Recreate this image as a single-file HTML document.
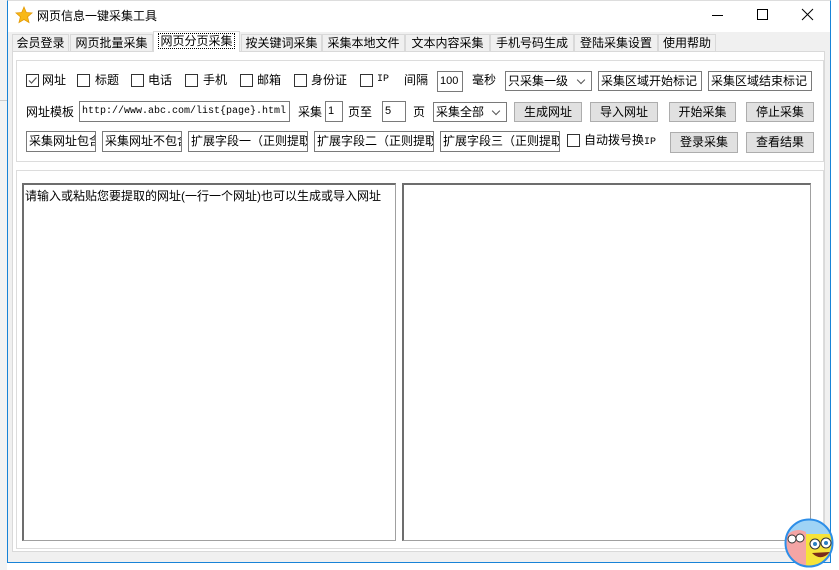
<!DOCTYPE html>
<html><head><meta charset="utf-8"><style>
*{box-sizing:border-box;margin:0;padding:0}
body{width:839px;height:570px;background:#fff;position:relative;overflow:hidden;font-family:"Liberation Sans","Noto Sans CJK SC",sans-serif;font-size:12px;color:#000}
.a{position:absolute;white-space:nowrap}
.t{position:absolute;white-space:nowrap;line-height:16px}
.cb{position:absolute;width:13px;height:13px;border:1px solid #333;background:#fff}
.in{position:absolute;border:1px solid #7a7a7a;background:#fff;line-height:18px;padding-left:2px;overflow:hidden;white-space:nowrap}
.btn{position:absolute;border:1px solid #adadad;background:#e1e1e1;text-align:center;line-height:18px}
.sel{position:absolute;border:1px solid #7a7a7a;background:#fff;line-height:18px;padding-left:2px}
.sel:after{content:"";position:absolute;right:7px;top:5px;width:5px;height:5px;border-right:1px solid #555;border-bottom:1px solid #555;transform:rotate(45deg)}
.tab{position:absolute;top:34px;height:17px;border:1px solid #d9d9d9;border-bottom:none;background:#f0f0f0;line-height:16px;text-align:center}
.mono{font-family:"Liberation Mono","Noto Sans CJK SC",monospace;font-size:10px}
</style></head><body>
<div class="a" style="left:0;top:0;width:7px;height:570px;background:#f3f3f3"></div>
<div class="a" style="left:0;top:100px;width:7px;height:1px;background:#ccc"></div>
<div class="a" style="left:7px;top:0;width:824px;height:563px;background:#f0f0f0;border:1px solid #1883d7;border-top:1px solid #ddd"></div>
<div class="a" style="left:8px;top:1px;width:822px;height:31px;background:#fff"></div>
<svg class="a" style="left:15px;top:6px" width="18" height="18" viewBox="0 0 18 18"><polygon points="9,1 11.3,6.5 17,7 12.6,10.8 14,16.5 9,13.5 4,16.5 5.4,10.8 1,7 6.7,6.5" fill="#f8b816" stroke="#e39a05" stroke-width="0.8"/></svg>
<div class="t" style="left:37px;top:8px">网页信息一键采集工具</div>
<div class="a" style="left:712px;top:15px;width:11px;height:1px;background:#000"></div>
<div class="a" style="left:757px;top:9px;width:11px;height:11px;border:1px solid #000"></div>
<svg class="a" style="left:801px;top:8px" width="13" height="13"><path d="M1 1L12 12M12 1L1 12" stroke="#000" stroke-width="1"/></svg>
<div class="tab" style="left:12px;width:57px">会员登录</div>
<div class="tab" style="left:70px;width:83px">网页批量采集</div>
<div class="tab" style="left:241px;width:81px">按关键词采集</div>
<div class="tab" style="left:322px;width:83px">采集本地文件</div>
<div class="tab" style="left:405px;width:85px">文本内容采集</div>
<div class="tab" style="left:490px;width:84px">手机号码生成</div>
<div class="tab" style="left:574px;width:84px">登陆采集设置</div>
<div class="tab" style="left:658px;width:58px">使用帮助</div>
<div class="a" style="left:12px;top:51px;width:813px;height:501px;background:#fff;border:1px solid #d9d9d9"></div>
<div class="tab" style="left:153px;top:31px;width:87px;height:21px;background:#fff;line-height:18px"><span style="outline:1px dotted #000;padding:0 1px">网页分页采集</span></div>
<div class="a" style="left:16px;top:60px;width:808px;height:102px;border:1px solid #dcdcdc"></div>
<div class="a" style="left:16px;top:170px;width:808px;height:379px;border:1px solid #dcdcdc"></div>
<!-- row1 -->
<div class="cb" style="left:26px;top:74px;border-color:#333"></div>
<svg class="a" style="left:27px;top:75px" width="11" height="11"><path d="M2 5.5L4.5 8L9.5 2.5" stroke="#555" stroke-width="1.2" fill="none"/></svg>
<div class="t" style="left:42px;top:72px">网址</div>
<div class="cb" style="left:77px;top:74px"></div><div class="t" style="left:95px;top:72px">标题</div>
<div class="cb" style="left:131px;top:74px"></div><div class="t" style="left:148px;top:72px">电话</div>
<div class="cb" style="left:185px;top:74px"></div><div class="t" style="left:203px;top:72px">手机</div>
<div class="cb" style="left:240px;top:74px"></div><div class="t" style="left:257px;top:72px">邮箱</div>
<div class="cb" style="left:294px;top:74px"></div><div class="t" style="left:311px;top:72px">身份证</div>
<div class="cb" style="left:360px;top:74px"></div><div class="t mono" style="left:377px;top:72px">IP</div>
<div class="t" style="left:404px;top:72px">间隔</div>
<div class="in" style="left:437px;top:71px;width:26px;height:21px;font-size:11px;line-height:19px">100</div>
<div class="t" style="left:472px;top:72px">毫秒</div>
<div class="sel" style="left:505px;top:71px;width:87px;height:20px">只采集一级</div>
<div class="in" style="left:598px;top:71px;width:104px;height:20px">采集区域开始标记</div>
<div class="in" style="left:708px;top:71px;width:104px;height:20px">采集区域结束标记</div>
<!-- row2 -->
<div class="t" style="left:26px;top:104px">网址模板</div>
<div class="in mono" style="left:79px;top:101px;width:211px;height:21px;line-height:19px">http://www.abc.com/list{page}.html</div>
<div class="t" style="left:298px;top:104px">采集</div>
<div class="in" style="left:325px;top:101px;width:18px;height:21px;font-size:11px;line-height:19px">1</div>
<div class="t" style="left:348px;top:104px">页至</div>
<div class="in" style="left:382px;top:101px;width:24px;height:21px;font-size:11px;line-height:19px">5</div>
<div class="t" style="left:413px;top:104px">页</div>
<div class="sel" style="left:433px;top:102px;width:74px;height:20px">采集全部</div>
<div class="btn" style="left:514px;top:102px;width:68px;height:20px">生成网址</div>
<div class="btn" style="left:590px;top:102px;width:68px;height:20px">导入网址</div>
<div class="btn" style="left:669px;top:102px;width:67px;height:20px">开始采集</div>
<div class="btn" style="left:746px;top:102px;width:68px;height:20px">停止采集</div>
<!-- row3 -->
<div class="in" style="left:26px;top:131px;width:70px;height:21px">采集网址包含</div>
<div class="in" style="left:102px;top:131px;width:80px;height:21px">采集网址不包含</div>
<div class="in" style="left:188px;top:131px;width:120px;height:21px">扩展字段一（正则提取</div>
<div class="in" style="left:314px;top:131px;width:120px;height:21px">扩展字段二（正则提取</div>
<div class="in" style="left:440px;top:131px;width:120px;height:21px">扩展字段三（正则提取</div>
<div class="cb" style="left:567px;top:134px"></div>
<div class="t" style="left:584px;top:132px">自动拨号换<span class="mono">IP</span></div>
<div class="btn" style="left:670px;top:132px;width:68px;height:21px;line-height:19px">登录采集</div>
<div class="btn" style="left:746px;top:132px;width:68px;height:21px;line-height:19px">查看结果</div>
<!-- text areas -->
<div class="a" style="left:22px;top:183px;width:374px;height:358px;border:1px solid #a0a0a0;border-top:2px solid #6d6d6d;border-left:2px solid #6d6d6d;background:#fff;padding:3px 0 0 1px;line-height:16px">请输入或粘贴您要提取的网址(一行一个网址)也可以生成或导入网址</div>
<div class="a" style="left:402px;top:183px;width:409px;height:358px;border:1px solid #a0a0a0;border-top:2px solid #6d6d6d;border-left:2px solid #6d6d6d;background:#fff"></div>
<!-- avatar -->
<svg class="a" style="left:784px;top:518px" width="50" height="50" viewBox="0 0 50 50">
<defs><clipPath id="c"><circle cx="25" cy="25" r="23"/></clipPath></defs>
<g clip-path="url(#c)">
<rect width="50" height="50" fill="#9fd3f5"/>
<path d="M0 20 Q10 8 22 14 L24 50 L0 50Z" fill="#f4a5a5"/>
<rect x="22" y="16" width="30" height="34" fill="#f6e33a"/>
<circle cx="8" cy="21" r="4" fill="#fff" stroke="#333"/><circle cx="16" cy="20" r="4" fill="#fff" stroke="#333"/>
<circle cx="31" cy="26" r="5" fill="#fff" stroke="#333"/><circle cx="42" cy="25" r="5" fill="#fff" stroke="#333"/>
<circle cx="31" cy="26" r="2" fill="#2a7fc0"/><circle cx="42" cy="25" r="2" fill="#2a7fc0"/>
<path d="M28 35 Q37 44 46 34 Z" fill="#7a2b1a"/>
</g>
<circle cx="25" cy="25" r="23.5" fill="none" stroke="#2d8ee8" stroke-width="2"/>
</svg>
</body></html>
